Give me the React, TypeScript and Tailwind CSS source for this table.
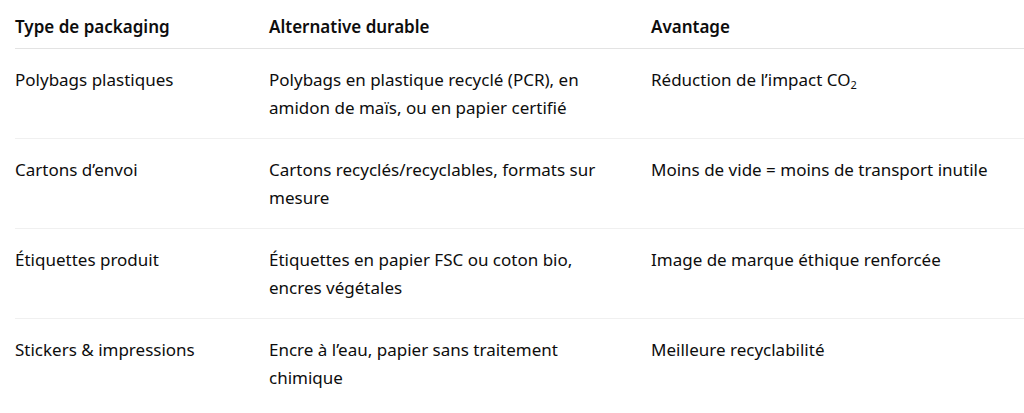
import React from "react";

const rows: [React.ReactNode, React.ReactNode, React.ReactNode][] = [
  [
    "Polybags plastiques",
    "Polybags en plastique recyclé (PCR), en amidon de maïs, ou en papier certifié",
    <>
      Réduction de l’impact CO<span className="text-[11px] align-[-3px]">2</span>
    </>,
  ],
  [
    "Cartons d’envoi",
    "Cartons recyclés/recyclables, formats sur mesure",
    "Moins de vide = moins de transport inutile",
  ],
  [
    "Étiquettes produit",
    "Étiquettes en papier FSC ou coton bio, encres végétales",
    "Image de marque éthique renforcée",
  ],
  [
    "Stickers & impressions",
    "Encre à l’eau, papier sans traitement chimique",
    "Meilleure recyclabilité",
  ],
];

export default function App() {
  return (
    <div
      className="w-[1024px] h-[413px] overflow-hidden bg-white pl-[15px] text-[#0d0d0d] text-[17px] leading-[28px]"
      style={{ fontFamily: '"Noto Sans", "Open Sans", sans-serif' }}
    >
      <div className="w-[1009px]">
        <div className="grid grid-cols-[254px_382px_373px] border-b border-[#e3e3e3] font-semibold">
          <div className="pt-[13px] pb-[7px] pr-8">Type de packaging</div>
          <div className="pt-[13px] pb-[7px] pr-8">Alternative durable</div>
          <div className="pt-[13px] pb-[7px] pr-2">Avantage</div>
        </div>
        {rows.map((r, i) => (
          <div
            key={i}
            className={
              "grid grid-cols-[254px_382px_373px] " +
              (i < rows.length - 1 ? "border-b border-[#f0f0f0]" : "")
            }
          >
            <div className="pt-[17px] pb-[16px] pr-8">{r[0]}</div>
            <div className="pt-[17px] pb-[16px] pr-8">{r[1]}</div>
            <div className="pt-[17px] pb-[16px] pr-2">{r[2]}</div>
          </div>
        ))}
      </div>
    </div>
  );
}
